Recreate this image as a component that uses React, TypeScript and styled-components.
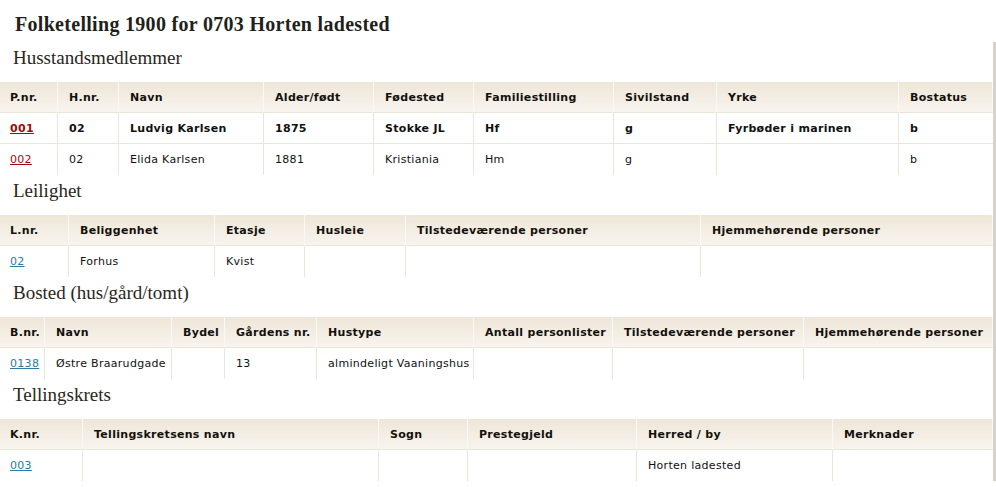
import React from 'react'
import styled, { createGlobalStyle } from 'styled-components'

const GlobalStyle = createGlobalStyle`
* { box-sizing: border-box; }
body {
    margin: 0;
    background: #fff;
    font-family: "DejaVu Sans", Verdana, sans-serif;
}
`;

export const Page = styled.div`
width: 996px;
`;

export const Title = styled.h1`
margin: 0;
padding: 12px 0 6px 15px;
height: 42px;
font-family: "Liberation Serif", Georgia, serif;
font-size: 20px;
letter-spacing: 0.3px;
line-height: 24px;
font-weight: bold;
color: #231f1a;
`;

export const Content = styled.div`
border-right: 3px solid #d5d2cc;
`;

export const Heading = styled.h2`
margin: 0;
padding: 4px 0 12px 13px;
height: 40px;
font-family: "Liberation Serif", Georgia, serif;
font-size: 19px;
line-height: 24px;
font-weight: normal;
color: #2a2620;
`;

export const Table = styled.table`
width: 993px;
table-layout: fixed;
border-collapse: separate;
border-spacing: 0;
font-size: 11px;
letter-spacing: 0.3px;
color: #111;
`;

export const Th = styled.th<{ $w?: number }>`
${p => p.$w ? `width: ${p.$w}px;` : ''}
height: 31px;
padding: 0 2px 0 11px;
text-align: left;
font-weight: bold;
white-space: nowrap;
color: #14110d;
background: linear-gradient(#eee6d8, #f8f4ee);
border-bottom: 1px solid #ebe5da;
&:first-child { padding-left: 10px; }
& + & { border-left: 1px solid #fbf9f5; }
&:last-child { border-right: 1px solid #fbf9f5; }
`;

export const Td = styled.td<{ $bold?: boolean }>`
height: 31px;
padding: 0 2px 0 11px;
white-space: nowrap;
font-weight: ${p => p.$bold ? 'bold' : 'normal'};
border-bottom: 1px solid #ebe6dc;
&:first-child { padding-left: 10px; }
& + & { border-left: 1px solid #ebe6dc; }
tr:last-child > & { border-bottom: none; }
`;

export const Link = styled.a<{ $red?: boolean }>`
color: ${p => p.$red ? '#9b0f0f' : '#2b7ba6'};
text-decoration: underline;
`;

type Cell = string | { link: string; red?: boolean };

type Section = {
    title: string;
    cols: [string, number?][];
    rows: { bold?: boolean; cells: Cell[] }[];
};

const sections: Section[] = [
    {
        title: 'Husstandsmedlemmer',
        cols: [['P.nr.', 57], ['H.nr.', 61], ['Navn', 145], ['Alder/født', 110], ['Fødested', 100], ['Familiestilling', 140], ['Sivilstand', 103], ['Yrke', 182], ['Bostatus']],
        rows: [
            { bold: true, cells: [{ link: '001', red: true }, '02', 'Ludvig Karlsen', '1875', 'Stokke JL', 'Hf', 'g', 'Fyrbøder i marinen', 'b'] },
            { cells: [{ link: '002', red: true }, '02', 'Elida Karlsen', '1881', 'Kristiania', 'Hm', 'g', '', 'b'] },
        ],
    },
    {
        title: 'Leilighet',
        cols: [['L.nr.', 68], ['Beliggenhet', 146], ['Etasje', 90], ['Husleie', 101], ['Tilstedeværende personer', 295], ['Hjemmehørende personer']],
        rows: [
            { cells: [{ link: '02' }, 'Forhus', 'Kvist', '', '', ''] },
        ],
    },
    {
        title: 'Bosted (hus/gård/tomt)',
        cols: [['B.nr.', 44], ['Navn', 127], ['Bydel', 53], ['Gårdens nr.', 92], ['Hustype', 157], ['Antall personlister', 139], ['Tilstedeværende personer', 191], ['Hjemmehørende personer']],
        rows: [
            { cells: [{ link: '0138' }, 'Østre Braarudgade', '', '13', 'almindeligt Vaaningshus', '', '', ''] },
        ],
    },
    {
        title: 'Tellingskrets',
        cols: [['K.nr.', 82], ['Tellingskretsens navn', 296], ['Sogn', 89], ['Prestegjeld', 169], ['Herred / by', 196], ['Merknader']],
        rows: [
            { cells: [{ link: '003' }, '', '', '', 'Horten ladested', ''] },
        ],
    },
];

export default function App() {
    return (
        <Page>
            <GlobalStyle />
            <Title>Folketelling 1900 for 0703 Horten ladested</Title>
            <Content>
                {sections.map(s => (
                    <section key={s.title}>
                        <Heading>{s.title}</Heading>
                        <Table>
                            <thead>
                                <tr>
                                    {s.cols.map(([label, w]) => <Th key={label} $w={w}>{label}</Th>)}
                                </tr>
                            </thead>
                            <tbody>
                                {s.rows.map((r, i) => (
                                    <tr key={i}>
                                        {r.cells.map((c, j) => (
                                            <Td key={j} $bold={r.bold}>
                                                {typeof c === 'string'
                                                    ? c
                                                    : <Link href="#" $red={c.red}>{c.link}</Link>}
                                            </Td>
                                        ))}
                                    </tr>
                                ))}
                            </tbody>
                        </Table>
                    </section>
                ))}
            </Content>
        </Page>
    )
}
